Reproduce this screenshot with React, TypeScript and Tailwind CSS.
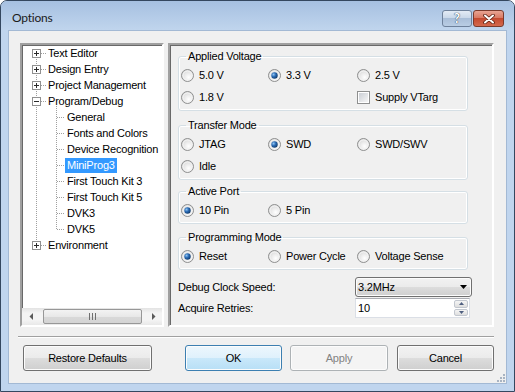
import React from "react";

type TreeNode = {
  label: string;
  depth: 0 | 1;
  toggle?: "plus" | "minus";
  selected?: boolean;
};

const treeItems: TreeNode[] = [
  { label: "Text Editor", depth: 0, toggle: "plus" },
  { label: "Design Entry", depth: 0, toggle: "plus" },
  { label: "Project Management", depth: 0, toggle: "plus" },
  { label: "Program/Debug", depth: 0, toggle: "minus" },
  { label: "General", depth: 1 },
  { label: "Fonts and Colors", depth: 1 },
  { label: "Device Recognition", depth: 1 },
  { label: "MiniProg3", depth: 1, selected: true },
  { label: "First Touch Kit 3", depth: 1 },
  { label: "First Touch Kit 5", depth: 1 },
  { label: "DVK3", depth: 1 },
  { label: "DVK5", depth: 1 },
  { label: "Environment", depth: 0, toggle: "plus" },
];

const btnBase =
  "h-[26px] rounded-[3px] border text-[11px] flex items-center justify-center shadow-[inset_0_0_0_1px_#fcfcfc]";
const btnNormal =
  "border-[#707070] text-black bg-[linear-gradient(to_bottom,#f2f2f2_0%,#ebebeb_50%,#dddddd_50%,#cfcfcf_100%)]";

function Radio({ checked }: { checked?: boolean }) {
  return (
    <svg width="13" height="13" viewBox="0 0 13 13" className="shrink-0">
      <defs>
        <radialGradient id="rdFill" cx="0.6" cy="0.65" r="0.7">
          <stop offset="0" stopColor="#ffffff" />
          <stop offset="1" stopColor="#d6d6d6" />
        </radialGradient>
        <radialGradient id="rdDot" cx="0.35" cy="0.35" r="0.75">
          <stop offset="0" stopColor="#8fc4f2" />
          <stop offset="0.45" stopColor="#2a6bb5" />
          <stop offset="1" stopColor="#0d335f" />
        </radialGradient>
      </defs>
      <circle cx="6.5" cy="6.5" r="6" fill="url(#rdFill)" stroke="#8e8f8f" />
      <circle cx="6.5" cy="6.5" r="4.5" fill="none" stroke="#f4f4f4" />
      {checked && <circle cx="6.5" cy="6.5" r="3.2" fill="url(#rdDot)" />}
    </svg>
  );
}

function Checkbox() {
  return (
    <span className="flex h-[13px] w-[13px] shrink-0 items-center justify-center border border-[#8e8f8f] bg-white">
      <span className="h-[9px] w-[9px] bg-gradient-to-br from-[#cbcfd5] to-[#f6f6f6]" />
    </span>
  );
}

function Option({ label, checked, box }: { label: string; checked?: boolean; box?: boolean }) {
  return (
    <div className="flex h-[22px] items-center gap-[5px]">
      {box ? <Checkbox /> : <Radio checked={checked} />}
      <span>{label}</span>
    </div>
  );
}

function Group({ title, className, children }: { title: string; className?: string; children: React.ReactNode }) {
  return (
    <fieldset
      className={`w-[290px] rounded-[3px] border border-[#d5dfe5] pb-[2px] pl-[2px] shadow-[inset_0_0_0_1px_#ffffff] ${className ?? ""}`}
    >
      <legend className="ml-[5px] px-[2px] leading-[16px]">{title}</legend>
      <div className="grid grid-cols-[87px_89px_1fr]">{children}</div>
    </fieldset>
  );
}

function TreeLines() {
  const c = (i: number) => i * 16 + 8;
  return (
    <svg className="pointer-events-none absolute left-0 top-0" width="140" height="212" shapeRendering="crispEdges">
      <g stroke="#a0a0a0" strokeDasharray="1 1">
        <line x1="14.5" y1={c(0)} x2="14.5" y2={c(12)} />
        <line x1="34.5" y1={c(3) + 5} x2="34.5" y2={c(11) + 1} />
        {treeItems.map((n, i) =>
          n.depth === 0 ? (
            <line key={i} x1="19" y1={c(i) + 0.5} x2="25" y2={c(i) + 0.5} />
          ) : (
            <line key={i} x1="35" y1={c(i) + 0.5} x2="43" y2={c(i) + 0.5} />
          )
        )}
      </g>
      {treeItems.map((n, i) =>
        n.toggle ? (
          <g key={`b${i}`}>
            <rect x="10.5" y={c(i) - 3.5} width="8" height="8" fill="#ffffff" stroke="#919191" />
            <line x1="12" y1={c(i) + 0.5} x2="17" y2={c(i) + 0.5} stroke="#2b2b2b" />
            {n.toggle === "plus" && <line x1="14.5" y1={c(i) - 2} x2="14.5" y2={c(i) + 3} stroke="#2b2b2b" />}
          </g>
        ) : null
      )}
    </svg>
  );
}

function Arrow({ dir }: { dir: "left" | "right" }) {
  return (
    <svg width="4" height="7" viewBox="0 0 4 7">
      {dir === "left" ? <path d="M4 0 L0.5 3.5 L4 7 Z" fill="#5a5a5a" /> : <path d="M0 0 L3.5 3.5 L0 7 Z" fill="#5a5a5a" />}
    </svg>
  );
}

function HScrollbar() {
  return (
    <div className="flex h-[17px] shrink-0 items-stretch bg-[linear-gradient(to_bottom,#e3e3e3,#f4f4f4_30%,#f4f4f4_70%,#e8e8e8)]">
      <div className="flex w-[17px] items-center justify-center">
        <Arrow dir="left" />
      </div>
      <div className="flex flex-1 items-center">
        <div className="ml-[4px] flex h-[15px] w-[99px] items-center justify-center gap-[2px] rounded-[2px] border border-[#979797] bg-[linear-gradient(to_bottom,#f3f3f3,#e8e8e8_50%,#d9d9d9_50%,#d4d4d4)]">
          <span className="h-[7px] w-[1px] bg-[#6f6f6f]" />
          <span className="h-[7px] w-[1px] bg-[#6f6f6f]" />
          <span className="h-[7px] w-[1px] bg-[#6f6f6f]" />
        </div>
      </div>
      <div className="flex w-[17px] items-center justify-center">
        <Arrow dir="right" />
      </div>
    </div>
  );
}

function Tree() {
  return (
    <div className="flex h-[284px] w-[144px] flex-col border-2 border-b-white border-l-[#a0a0a0] border-r-white border-t-[#a0a0a0] bg-white shadow-[inset_1px_1px_0_#696969]">
      <div className="relative flex-1">
        <TreeLines />
        {treeItems.map((n) => (
          <div
            key={n.label}
            className={`flex h-[16px] items-center whitespace-nowrap ${n.depth === 0 ? "pl-[26px]" : "pl-[45px]"}`}
          >
            {n.selected ? (
              <span className="-ml-[2px] bg-[#3399ff] px-[2px] leading-[15px] text-white">{n.label}</span>
            ) : (
              <span className="leading-[16px]">{n.label}</span>
            )}
          </div>
        ))}
      </div>
      <HScrollbar />
    </div>
  );
}

function SettingsPanel() {
  return (
    <div className="h-[284px] w-[326px] border-2 border-b-white border-l-[#a0a0a0] border-r-white border-t-[#a0a0a0] pl-[8px] pt-[3px] shadow-[inset_1px_1px_0_#696969]">
      <Group title="Applied Voltage">
        <Option label="5.0 V" />
        <Option label="3.3 V" checked />
        <Option label="2.5 V" />
        <Option label="1.8 V" />
        <div />
        <Option label="Supply VTarg" box />
      </Group>
      <Group title="Transfer Mode" className="mt-[6px]">
        <Option label="JTAG" />
        <Option label="SWD" checked />
        <Option label="SWD/SWV" />
        <Option label="Idle" />
      </Group>
      <Group title="Active Port" className="mt-[3px]">
        <Option label="10 Pin" checked />
        <Option label="5 Pin" />
      </Group>
      <Group title="Programming Mode" className="mt-[5px]">
        <Option label="Reset" checked />
        <Option label="Power Cycle" />
        <Option label="Voltage Sense" />
      </Group>

      <div className="mt-[7px] flex h-[20px] items-center">
        <span className="w-[177px]">Debug Clock Speed:</span>
        <div className={`${btnNormal} flex h-[20px] w-[117px] items-center justify-between rounded-[3px] border pl-[2px] pr-[4px] shadow-[inset_0_0_0_1px_#fcfcfc]`}>
          <span>3.2MHz</span>
          <svg width="7" height="4" viewBox="0 0 7 4">
            <path d="M0 0 H7 L3.5 4 Z" fill="#000000" />
          </svg>
        </div>
      </div>
      <div className="mt-[1px] flex h-[20px] items-center">
        <span className="w-[177px]">Acquire Retries:</span>
        <div className="flex h-[20px] w-[115px] items-stretch border border-[#dbdfe6] border-t-[#abadb3] bg-white">
          <span className="flex-1 pl-[2px] leading-[18px]">10</span>
          <div className="flex w-[15px] flex-col gap-[1px] py-[1px] pr-[1px]">
            {[0, 1].map((k) => (
              <div
                key={k}
                className="flex flex-1 items-center justify-center rounded-[2px] border border-[#c2c7cf] bg-[linear-gradient(to_bottom,#f5f5f5,#dedede)]"
              >
                <svg width="5" height="3" viewBox="0 0 5 3">
                  <path d={k === 0 ? "M0 3 L2.5 0 L5 3 Z" : "M0 0 L2.5 3 L5 0 Z"} fill="#4e5f80" />
                </svg>
              </div>
            ))}
          </div>
        </div>
      </div>
    </div>
  );
}

function TitleBar() {
  return (
    <div className="flex h-[29px] shrink-0 items-start bg-gradient-to-b from-[#a6c0e1] to-[#c0d5ed] pl-[11px] pr-[10px]">
      <span className="flex-1 pt-[8px] font-['Lato',sans-serif] text-[12px] leading-[17px] text-[#1b1b1b]">Options</span>
      <div className="mt-[9px] flex items-center gap-[1px]">
        <div className="flex h-[17px] w-[30px] items-center justify-center rounded-[3px] border border-[#6e819b] bg-[linear-gradient(to_bottom,#e3ebf5,#c7d6e8_50%,#a9bed8_50%,#b9cde4)]">
          <span className="font-['Lato',sans-serif] text-[13px] font-bold leading-none text-white [text-shadow:0_0_1px_#2c3e57,0_0_1px_#2c3e57]">
            ?
          </span>
        </div>
        <div className="flex h-[17px] w-[31px] items-center justify-center rounded-[3px] border border-[#7a3a2c] bg-[linear-gradient(to_bottom,#e8a493,#d7755f_50%,#c44a30_50%,#d4694d)]">
          <svg width="12" height="10" viewBox="0 0 12 10">
            <path d="M2 1.5 L10 8.5 M10 1.5 L2 8.5" stroke="#5a1f12" strokeWidth="3.6" strokeLinecap="round" />
            <path d="M2 1.5 L10 8.5 M10 1.5 L2 8.5" stroke="#ffffff" strokeWidth="2" strokeLinecap="round" />
          </svg>
        </div>
      </div>
    </div>
  );
}

export default function App() {
  return (
    <div className="h-[392px] w-[515px] bg-white font-['Liberation_Sans',Arial,sans-serif] text-[11px] tracking-[-0.2px] text-black">
      <div className="flex h-full w-full flex-col overflow-hidden rounded-t-[7px] border border-[#34475f] bg-[#c0d5ee]">
        <TitleBar />
        <div className="mx-[7px] flex h-[354px] flex-col border border-[#a3b9d4] bg-[#f0f0f0]">
          <div className="ml-[11px] mt-[12px] flex gap-[4px]">
            <Tree />
            <SettingsPanel />
          </div>
          <div className="ml-[9px] mt-[9px] h-[2px] w-[476px] border-b border-t border-b-white border-t-[#a0a0a0]" />
          <div className="mt-[7px] flex pl-[14px]">
            <button className={`${btnBase} ${btnNormal} w-[129px]`}>Restore Defaults</button>
            <button className={`${btnBase} ml-[33px] w-[97px] border-[#3c7fb1] bg-[linear-gradient(to_bottom,#edf7fd_0%,#dff1fc_50%,#c9e8fa_50%,#b7dff6_100%)] shadow-[inset_0_0_0_1px_#bfe6fb]`}>
              OK
            </button>
            <button className={`${btnBase} ml-[8px] w-[98px] border-[#adb2b5] bg-[#f4f4f4] text-[#838383]`}>Apply</button>
            <button className={`${btnBase} ${btnNormal} ml-[9px] w-[97px]`}>Cancel</button>
          </div>
          <div className="mt-auto flex justify-end pb-[1px] pr-[1px]">
            <svg width="8" height="8" viewBox="0 0 8 8">
              <g fill="#a9b4c2">
                <rect x="6" y="0" width="2" height="2" />
                <rect x="3" y="3" width="2" height="2" />
                <rect x="6" y="3" width="2" height="2" />
                <rect x="0" y="6" width="2" height="2" />
                <rect x="3" y="6" width="2" height="2" />
                <rect x="6" y="6" width="2" height="2" />
              </g>
            </svg>
          </div>
        </div>
      </div>
    </div>
  );
}
